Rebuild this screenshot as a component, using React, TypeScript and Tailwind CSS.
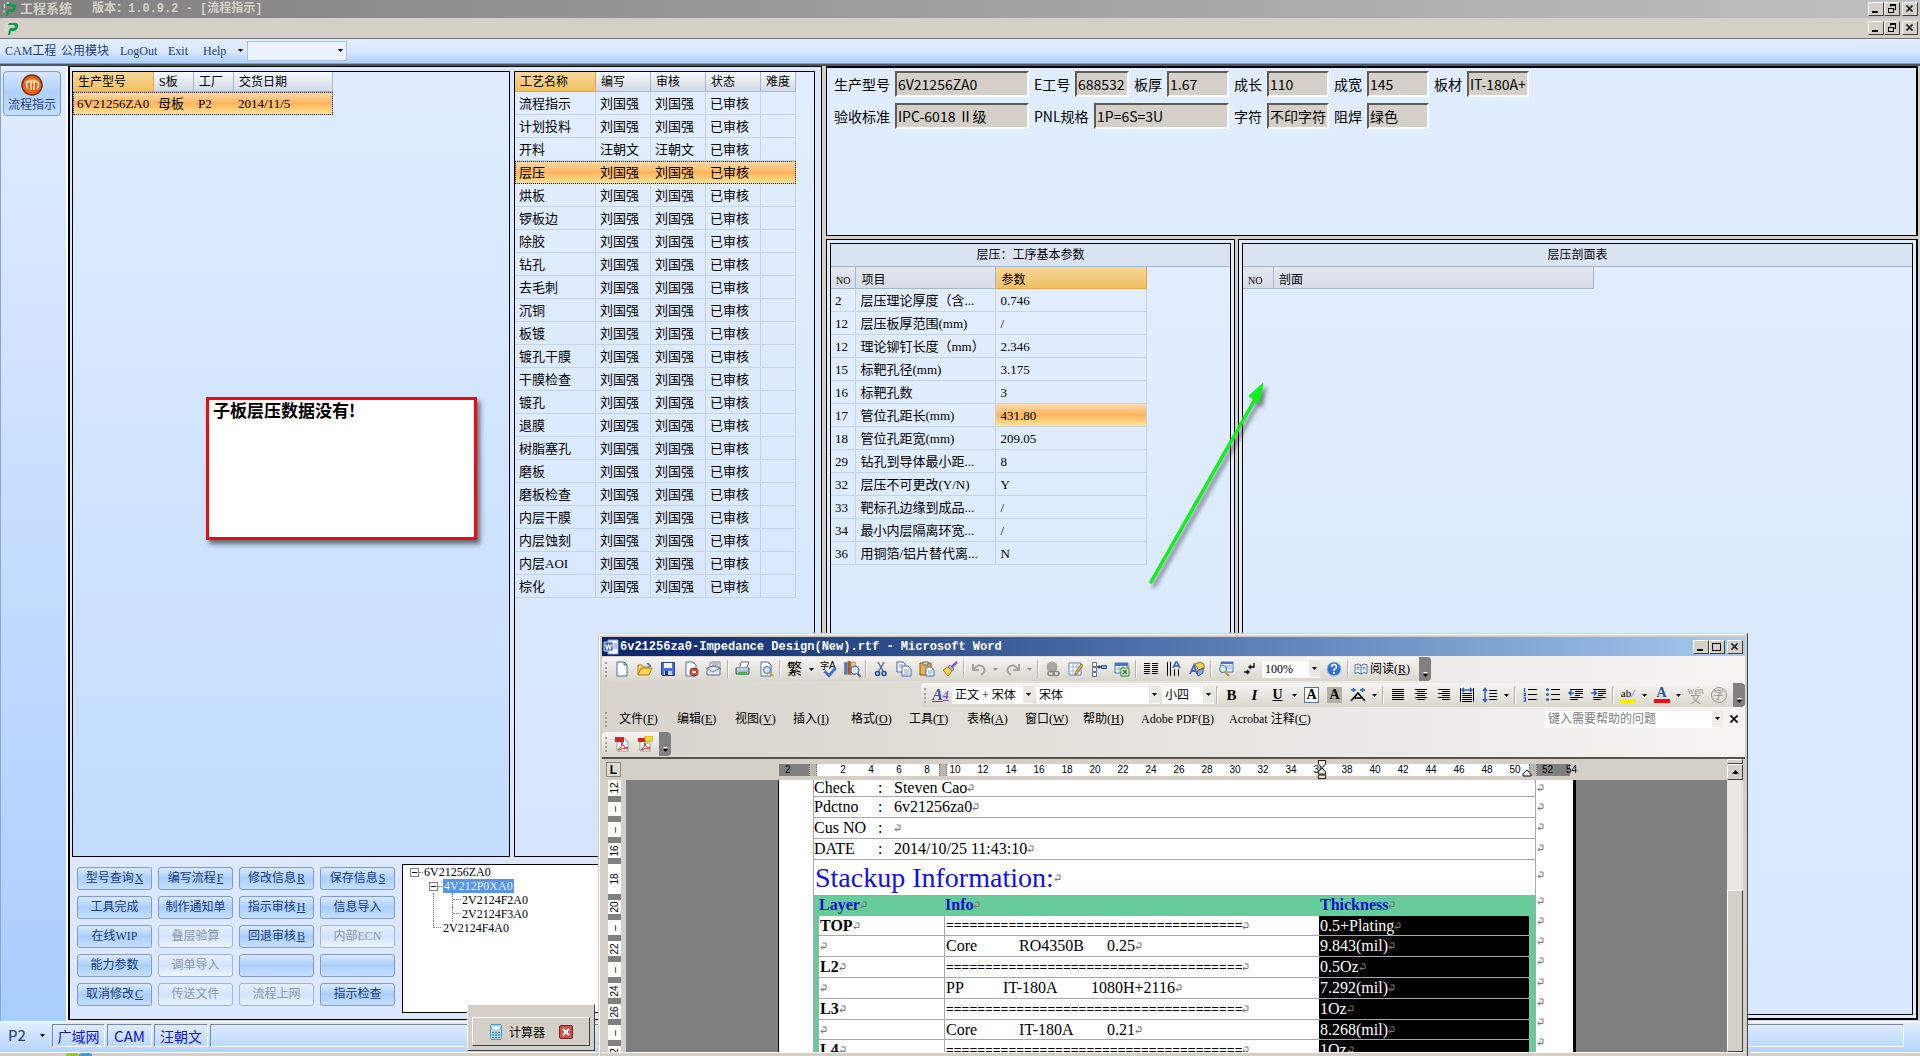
import React from "react";

const SERIF = "font-['Liberation_Serif','Noto_Sans_CJK_SC',serif]";
const SANS = "font-['Noto_Sans_CJK_SC',sans-serif]";
const MONO = "font-['Liberation_Mono','Noto_Sans_CJK_SC',monospace]";

const HEAD = "bg-linear-to-b from-[#f8fafd] via-[#e4e9f2] to-[#d3dae6] border-r border-b border-[#a3b8cc]";
const HEAD_FLAT = "bg-linear-to-b from-[#e3e7f0] to-[#d6dce8] border-r border-b border-[#a3b8cc]";
const HEAD_ON = "bg-linear-to-b from-[#f8d79b] to-[#f0c05e] border-r border-b border-[#e8a24a]";
const SELECTED = "bg-linear-to-b from-[#fcdcae] via-[#fdb45c] to-[#ffe796]";

/* ---------- icons ---------- */

function Svg({ children, className = "size-4" }: { children: React.ReactNode; className?: string }) {
  return (
    <svg viewBox="0 0 16 16" className={`shrink-0 ${className}`} aria-hidden="true">
      {children}
    </svg>
  );
}

const page = <path d="M3 1h7l3 3v11H3z" fill="#fff" stroke="#4a6ea5" />;

const lines = (xs: number[][]) => (
  <g stroke="#000" strokeWidth="1" shapeRendering="crispEdges">
    {xs.map(([a, b, y]) => (
      <path key={`${a}-${y}`} d={`M${a} ${y + 0.5}H${b}`} />
    ))}
  </g>
);

const icons: Record<string, React.ReactNode> = {
  新建: <Svg>{page}<path d="M10 1v3h3z" fill="#b9cdea" stroke="#4a6ea5" /></Svg>,
  打开: <Svg><path d="M1 14V4h4l1 2h6v3" fill="#f9e08c" stroke="#b07a14" /><path d="M1 14l3-7h11l-3 7z" fill="#ffd25a" stroke="#b07a14" /><path d="M9 3q3-3 4 1l1-1v3h-3l1-1q-1-2-3-2z" fill="#5a7fc0" /></Svg>,
  保存: <Svg><path d="M1.500 1.500h13v13h-12l-1-1z" fill="#4d6fd0" stroke="#2a3f8f" /><path d="M4 2h8v5H4z" fill="#fff" /><path d="M4 10h8v4H4z" fill="#c3cfe8" /><path d="M5 10h3v4H5z" fill="#24346f" /></Svg>,
  权限: <Svg>{page}<circle cx="11" cy="11" r="4" fill="#d94a2b" stroke="#a12c14" /><path d="M9 11h4" stroke="#fff" strokeWidth="2" /></Svg>,
  邮件: <Svg><path d="M4 6V2l2-1h8v8" fill="#fff" stroke="#6f7f99" /><path d="M1 7l6-2 7 2v7H1z" fill="#dfe6f4" stroke="#5a6b8c" /><path d="M1 7l6 4 7-4M6 3h6M6 5h6" fill="none" stroke="#6f7f99" /></Svg>,
  打印: <Svg><path d="M5 6l1-5h8l-2 5" fill="#fff" stroke="#5d6f8c" /><path d="M1 7h13v6H1z" fill="#a9bbd6" stroke="#3f5275" /><path d="M3 11h9v3H3z" fill="#4fb04a" /><path d="M2 8h11" stroke="#fff" /></Svg>,
  预览: <Svg>{page}<circle cx="9" cy="9" r="3.500" fill="#cfe6fa" stroke="#3e5f94" /><path d="M11.500 11.500l3.500 3.500" stroke="#caa04a" strokeWidth="2" /></Svg>,
  拼写: <Svg className="size-[18px]"><text x="0" y="8" fontSize="8" fontFamily="Noto Sans CJK SC">字</text><text x="8" y="8" fontSize="9" fontFamily="Liberation Sans">A</text><path d="M4 10l4 4 6-7" fill="none" stroke="#3f6fcf" strokeWidth="2.500" /></Svg>,
  信息检索: <Svg className="size-[18px]"><path d="M1 2h3v11H1z" fill="#5577c4" /><path d="M4 1h3v12H4z" fill="#b5522d" /><path d="M7 2h4v11H7z" fill="#dccb7a" stroke="#80713a" strokeWidth=".5" /><circle cx="10.500" cy="9" r="3.500" fill="#d8ebfb" stroke="#3e5f94" /><path d="M13 12l2.500 3" stroke="#7d55a8" strokeWidth="2" /></Svg>,
  剪切: <Svg><path d="M5 1l5 9M11 1L6 10" stroke="#5570a5" strokeWidth="1.500" /><circle cx="4.500" cy="12.500" r="2" fill="none" stroke="#1f3f8f" strokeWidth="1.500" /><circle cx="11" cy="12.500" r="2" fill="none" stroke="#1f3f8f" strokeWidth="1.500" /></Svg>,
  复制: <Svg><path d="M1 1h6l2 2v8H1z" fill="#fff" stroke="#3f66b5" /><path d="M6 5h6l3 3v7H6z" fill="#fff" stroke="#3f66b5" /><path d="M3 4h4M3 6h2M8 9h5M8 11h5M8 13h5" stroke="#7a9bd6" /></Svg>,
  粘贴: <Svg><path d="M1 2h11v12H1z" fill="#eab04a" stroke="#8a5a14" /><path d="M4 1h5v3H4z" fill="#ddd" stroke="#665" /><path d="M7 6h5l3 3v6H7z" fill="#fff" stroke="#3f66b5" /><path d="M9 10h4M9 12h4" stroke="#7a9bd6" /></Svg>,
  格式刷: <Svg><path d="M15 1l-5 5" stroke="#8a5ab0" strokeWidth="2.500" /><path d="M8 4l4 4-2 2-4-4z" fill="#9db2d8" stroke="#4a5f8c" strokeWidth=".7" /><path d="M6 6l4 4-4 5-5-6z" fill="#f5d44a" stroke="#9a7d14" /></Svg>,
  撤消: <Svg><path d="M2 3v6h6" fill="none" stroke="#a5a39c" strokeWidth="2" /><path d="M3 8q5-6 9-2t-2 8" fill="none" stroke="#a5a39c" strokeWidth="2" /></Svg>,
  恢复: <Svg><path d="M14 3v6H8" fill="none" stroke="#a5a39c" strokeWidth="2" /><path d="M13 8Q8 2 4 6t2 8" fill="none" stroke="#a5a39c" strokeWidth="2" /></Svg>,
  超链接: <Svg><circle cx="7" cy="6" r="5.500" fill="#a8a69f" /><rect x="3" y="10.500" width="6" height="4" rx="2" fill="none" stroke="#8a8882" strokeWidth="1.500" /><rect x="8" y="10.500" width="6" height="4" rx="2" fill="none" stroke="#8a8882" strokeWidth="1.500" /></Svg>,
  表格和边框: <Svg><path d="M1 2h12v12H1z" fill="#fff" stroke="#5c7fc4" /><path d="M1 6h12M1 10h12M5 2v12M9 2v12" stroke="#9db5e0" /><path d="M15 4l-6 9-2 1 0-2 6-9z" fill="#e8b042" stroke="#7a5a1a" strokeWidth=".7" /></Svg>,
  链接框: <Svg><path d="M1.500 1.500h4v4h-4zM1.500 6.500h4v4h-4zM1.500 11.500h4v4h-4z" fill="#fff" stroke="#5c6f94" /><path d="M10.500 4.500h5v3h-5z" fill="#8fb0ea" stroke="#2f4f94" /><path d="M6 6h4M8 4.500v3" stroke="#000" strokeWidth="1" /></Svg>,
  插入工作表: <Svg><path d="M1 2h13v10H1z" fill="#fff" stroke="#4b74c8" /><path d="M1 2h13v3H1z" fill="#4b74c8" /><path d="M1 8h13M5 5v7M9 5v7" stroke="#8aa9e2" /><path d="M7 7h8v8H7z" fill="#e6f4e2" stroke="#2f7f35" /><path d="M9 9l4 4M13 9l-4 4" stroke="#1f7a2b" strokeWidth="1.500" /></Svg>,
  分栏: <Svg>{lines([[1, 7, 2], [1, 7, 4], [1, 7, 6], [1, 7, 8], [1, 7, 10], [1, 7, 12], [9, 15, 2], [9, 15, 4], [9, 15, 6], [9, 15, 8], [9, 15, 10], [9, 15, 12]])}</Svg>,
  文字方向: <Svg><path d="M1.500 1v14M4.500 1v14M8.500 8v7M12.500 8v7" stroke="#000" shapeRendering="crispEdges" /><path d="M7 7l3-6h1l3 6M8.500 5h4" fill="none" stroke="#3558b5" strokeWidth="1.500" /></Svg>,
  绘图: <Svg><path d="M6 3l5-2 4 2v5l-5 2z" fill="#f0cf52" stroke="#8c7420" /><path d="M1 13l4-9 3 9M2 10h5" fill="none" stroke="#4a5fc0" strokeWidth="1.800" /><path d="M8 10l6-3v5l-5 3z" fill="#8ea6dd" stroke="#44599a" /></Svg>,
  文档结构图: <Svg><path d="M3 1h12v10H3z" fill="#e8f1fc" stroke="#4b74c8" /><path d="M3 1h12v2H3z" fill="#4b74c8" /><path d="M8 5h6M8 7h6" stroke="#8aa9e2" /><circle cx="5" cy="8" r="3.500" fill="#cfeaf2" stroke="#3e7f94" /><path d="M7 11l4 4" stroke="#c5983a" strokeWidth="2" /></Svg>,
  显示标记: <Svg><path d="M13 2v4H8M10 4L8 6l2 2M3 11h5M6 9l2 2-2 2" fill="none" stroke="#000" strokeWidth="1.300" /></Svg>,
  帮助图标: <Svg><circle cx="8" cy="8" r="7" fill="#2f6fe0" stroke="#9fc0f4" /><path d="M5.500 6q0-2.500 2.500-2.500T10.500 6Q10.500 7.500 8 8.500V10M8 11v2" fill="none" stroke="#fff" strokeWidth="1.700" /></Svg>,
  左对齐: <Svg>{lines([[2, 14, 2], [2, 14, 4], [2, 14, 6], [2, 14, 8], [2, 14, 10], [2, 14, 12]])}</Svg>,
  居中: <Svg>{lines([[2, 14, 2], [4, 12, 4], [2, 14, 6], [4, 12, 8], [2, 14, 10], [4, 12, 12]])}</Svg>,
  右对齐: <Svg>{lines([[2, 14, 2], [6, 14, 4], [2, 14, 6], [6, 14, 8], [2, 14, 10], [6, 14, 12]])}</Svg>,
  分散对齐: <Svg>{lines([[3, 13, 6], [3, 13, 8], [3, 13, 10], [3, 13, 12], [3, 13, 14]])}<path d="M1.500 1v14M14.500 1v14" stroke="#000" /><path d="M3 3h10M5 1L3 3l2 2M11 1l2 2-2 2" fill="none" stroke="#2f5fc4" strokeWidth="1.500" /></Svg>,
  行距: <Svg>{lines([[7, 15, 3], [7, 15, 6], [7, 15, 9], [7, 15, 12]])}<path d="M3 2v12M1 4l2-2.500L5 4M1 12l2 2.500L5 12" fill="none" stroke="#2f5fc4" strokeWidth="1.500" /></Svg>,
  编号: <Svg>{lines([[6, 15, 2], [6, 15, 7], [6, 15, 12]])}<path d="M2.500 1v4M1.500 6.500h2v2h-2M1.500 11h2v3h-2" fill="none" stroke="#2f5fc4" strokeWidth="1.300" /></Svg>,
  项目符号: <Svg>{lines([[6, 15, 2], [6, 15, 7], [6, 15, 12]])}<g fill="#2f5fc4"><circle cx="2.500" cy="2.500" r="1.500" /><circle cx="2.500" cy="7.500" r="1.500" /><circle cx="2.500" cy="12.500" r="1.500" /></g></Svg>,
  减少缩进: <Svg>{lines([[2, 15, 2], [7, 15, 4], [7, 15, 6], [7, 12, 8], [2, 15, 10], [2, 10, 12]])}<path d="M6 6H1M3.500 3.500L1 6l2.500 2.500" fill="none" stroke="#2f5fc4" strokeWidth="1.500" /></Svg>,
  增加缩进: <Svg>{lines([[2, 15, 2], [7, 15, 4], [7, 15, 6], [7, 12, 8], [2, 15, 10], [2, 10, 12]])}<path d="M0 6h5M3 3.500L5.500 6 3 8.500" fill="none" stroke="#2f5fc4" strokeWidth="1.500" /></Svg>,
  字符缩放: <Svg><path d="M1 14l7-8 7 8M4.500 11h7" fill="none" stroke="#000" strokeWidth="1.500" /><path d="M1 3h5M3.500 1v4M10 3h5M12.500 1v4" stroke="#2f5fc4" strokeWidth="1.500" /></Svg>,
};

function Caret({ dim = false }: { dim?: boolean }) {
  return (
    <svg viewBox="0 0 5 3" className="h-[3px] w-[5px] shrink-0" aria-hidden="true">
      <path d="M0 0h5L2.500 3z" fill={dim ? "#9a988f" : "#000"} />
    </svg>
  );
}

function LogoP() {
  return (
    <svg viewBox="0 0 14 15" className="h-[15px] w-[14px] shrink-0" aria-hidden="true">
      <path d="M4 2h6q4 0 3 4t-5 4H6l-1 4H3l1-5 1-2h4q1 0 1-1.500T8 4H3z" fill="#0d9a4a" />
      <path d="M1.500 2v4M3.500 1H6M.500 8l1 3" stroke="#e9f5ec" strokeWidth="1" />
    </svg>
  );
}

function Mark() {
  return (
    <svg viewBox="0 0 7 8" className="h-2 w-[7px] shrink-0" aria-hidden="true">
      <path d="M2.500 1h3.500v4.500H1M3 3.500l-2 2 2 2" fill="none" stroke="#777" />
    </svg>
  );
}

/* ---------- classic window controls ---------- */

const BEVEL = "border border-t-white border-l-white border-r-[#404040] border-b-[#404040] bg-[#d4d0c8]";

function WinButton({ kind }: { kind: "min" | "restore" | "max" | "close" }) {
  const label = { min: "最小化", restore: "还原", max: "最大化", close: "关闭" }[kind];
  return (
    <button aria-label={label} className={`flex h-[14px] w-4 items-center justify-center ${BEVEL} ${kind === "close" ? "ml-[2px]" : ""}`}>
      <svg viewBox="0 0 10 10" className="size-[10px]" fill="none" stroke="#000" shapeRendering="crispEdges" aria-hidden="true">
        {kind === "min" && <path d="M1 8h6" strokeWidth="2" />}
        {kind === "restore" && <path d="M3.500 3V.500h5v5H6M3 1h6M1.500 4.500h5v4h-5zM1 4h6" />}
        {kind === "max" && <path d="M.500 1.500h8v7h-8zM0 1h9" />}
        {kind === "close" && <path d="M1.500 1.500l6 6M7.500 1.500l-6 6" strokeWidth="1.500" shapeRendering="auto" />}
      </svg>
    </button>
  );
}

function WinButtons({ middle }: { middle: "restore" | "max" }) {
  return (
    <div className="flex">
      <WinButton kind="min" />
      <WinButton kind={middle} />
      <WinButton kind="close" />
    </div>
  );
}

/* ---------- main application ---------- */

function TopBars() {
  const item = "whitespace-nowrap";
  return (
    <header>
      <div className={`flex h-[18px] items-center bg-linear-to-r from-[#808080] to-[#c0c0c0] pl-[3px] pr-[2px] text-[12px] font-bold leading-none text-[#d4d0c8] ${MONO}`}>
        <LogoP />
        <h1 className="ml-[3px] flex flex-1 items-center gap-5 whitespace-pre">
          <span className="text-[13px]">工程系统</span>
          <span>版本：1.0.9.2 - [流程指示]</span>
        </h1>
        <WinButtons middle="restore" />
      </div>
      <div className="flex h-5 items-center justify-between bg-[#d4d0c8] pl-[5px] pr-[2px]">
        <LogoP />
        <WinButtons middle="restore" />
      </div>
      <nav className={`flex h-[26px] items-center border-b border-t border-b-[#7f9fc9] border-t-[#6e7480] bg-linear-to-b from-[#e3eefe] via-[#d9e8ff] to-[#abcfff] pb-px pl-[5px] text-[12px] text-[#1b3d7c] ${SERIF}`}>
        <button className={`${item} w-14 text-left`}>CAM工程</button>
        <button className={`${item} w-[59px] text-left`}>公用模块</button>
        <button className={`${item} w-12 text-left`}>LogOut</button>
        <button className={`${item} w-[35px] text-left`}>Exit</button>
        <button className={`${item} flex w-10 items-center justify-between`}>Help<Caret /></button>
        <div className="relative ml-1">
          <select aria-label="模块" className="h-5 w-[100px] appearance-none border border-[#a9c3e8] bg-[#eaf2fd]"><option></option></select>
          <span className="pointer-events-none absolute right-1 top-2"><Caret /></span>
        </div>
      </nav>
    </header>
  );
}

function Sidebar() {
  return (
    <aside className="flex w-[66px] shrink-0 flex-col border-l border-[#8aa6d2] bg-linear-to-b from-[#e1ecff] to-[#a9cdff] px-[2px] pt-[5px]">
      <button className={`flex h-[45px] w-[58px] flex-col items-center rounded-sm border border-[#7e9cc9] bg-linear-to-b from-[#d7e6fd] via-[#aed0fb] to-[#c5deff] pt-[2px] text-[12px] text-[#1b3d7c] ${SANS}`}>
        <svg viewBox="0 0 22 22" className="size-[22px]" aria-hidden="true">
          <circle cx="11" cy="11" r="10" fill="#e8621a" stroke="#7d2a10" strokeWidth="1.500" />
          <path d="M3 9q8-8 16 0" fill="#ffb066" />
          <path d="M7 7q-3 4 0 8M10 6v10M13 6v10M16 7q3 4 0 8" fill="none" stroke="#ffe9c9" strokeWidth="1.500" />
        </svg>
        <span className="leading-4">流程指示</span>
      </button>
    </aside>
  );
}

const AUTHOR = "刘国强";
const steps = ["流程指示", "计划投料", "开料", "层压", "烘板", "锣板边", "除胶", "钻孔", "去毛刺", "沉铜", "板镀", "镀孔干膜", "干膜检查", "镀孔", "退膜", "树脂塞孔", "磨板", "磨板检查", "内层干膜", "内层蚀刻", "内层AOI", "棕化"];

const ROW_ON = `${SELECTED} outline-1 -outline-offset-1 outline-dotted outline-black`;

function ModelGrid() {
  const th = "h-5 px-[5px] text-left text-[12px] font-normal leading-none";
  const td = "h-[23px] whitespace-nowrap px-1 leading-none";
  return (
    <section className="w-[438px] shrink-0 border border-black bg-linear-to-b from-[#e0edff] to-[#c2dcff]">
      <table className={`table-fixed border-separate border-spacing-0 text-[13px] ${SERIF}`}>
        <colgroup><col className="w-[81px]" /><col className="w-10" /><col className="w-10" /><col className="w-[99px]" /></colgroup>
        <thead>
          <tr>
            <th className={`${th} ${HEAD_ON}`}>生产型号</th>
            <th className={`${th} ${HEAD}`}>S板</th>
            <th className={`${th} ${HEAD}`}>工厂</th>
            <th className={`${th} ${HEAD}`}>交货日期</th>
          </tr>
        </thead>
        <tbody>
          <tr className={ROW_ON}>
            <td className={td}>6V21256ZA0</td>
            <td className={td}>母板</td>
            <td className={td}>P2</td>
            <td className={td}>2014/11/5</td>
          </tr>
        </tbody>
      </table>
    </section>
  );
}

function StepGrid() {
  const th = "h-5 px-[5px] text-left text-[12px] font-normal leading-none";
  const cell = "h-[23px] whitespace-nowrap px-1 leading-none";
  const line = "border-b border-r border-[#c3d3e8]";
  return (
    <section className="w-[301px] shrink-0 border border-black bg-linear-to-b from-[#e2eeff] via-[#dceaff] to-[#d6e5ff]">
      <table className={`table-fixed border-separate border-spacing-0 text-[13px] ${SERIF}`}>
        <colgroup><col className="w-[81px]" /><col className="w-[55px]" /><col className="w-[55px]" /><col className="w-[55px]" /><col className="w-[35px]" /></colgroup>
        <thead>
          <tr>
            <th className={`${th} ${HEAD_ON}`}>工艺名称</th>
            {["编写", "审核", "状态", "难度"].map((h) => <th key={h} className={`${th} ${HEAD}`}>{h}</th>)}
          </tr>
        </thead>
        <tbody>
          {steps.map((s) => {
            const on = s === "层压";
            const who = s === "开料" ? "汪朝文" : AUTHOR;
            const c = on ? cell : `${cell} ${line}`;
            return (
              <tr key={s} className={on ? ROW_ON : ""}>
                <td className={c}>{s}</td><td className={c}>{who}</td><td className={c}>{who}</td><td className={c}>已审核</td><td className={c}></td>
              </tr>
            );
          })}
        </tbody>
      </table>
    </section>
  );
}

type Cmd = { t: string; k?: string; off?: boolean };
const commands: Cmd[] = [
  { t: "型号查询", k: "X" }, { t: "编写流程", k: "F" }, { t: "修改信息", k: "R" }, { t: "保存信息", k: "S" },
  { t: "工具完成" }, { t: "制作通知单" }, { t: "指示审核", k: "H" }, { t: "信息导入" },
  { t: "在线WIP" }, { t: "叠层验算", off: true }, { t: "回退审核", k: "B" }, { t: "内部ECN", off: true },
  { t: "能力参数" }, { t: "调单导入", off: true }, { t: "" }, { t: "" },
  { t: "取消修改", k: "C" }, { t: "传送文件", off: true }, { t: "流程上网", off: true }, { t: "指示检查" },
];

function CommandPad() {
  return (
    <div className={`grid shrink-0 grid-cols-4 content-start gap-[6px] pt-[10px] text-[12px] ${SERIF}`}>
      {commands.map((c, i) => (
        <button
          key={i}
          disabled={c.off}
          aria-label={c.t || "备用"}
          className={`flex h-[23px] w-[75px] items-center justify-center whitespace-nowrap rounded-[3px] border pb-px leading-none ${c.off ? "border-[#9fb6d8] bg-linear-to-b from-[#e4effd] via-[#d3e4fb] to-[#eaf3ff] text-[#8d97a6]" : "border-[#7f9dcb] bg-linear-to-b from-[#d9e8fe] via-[#abcffc] to-[#c6deff] text-[#163a7a]"}`}
        >
          {c.t}{c.k && <span className="ml-[1px] underline">{c.k}</span>}
        </button>
      ))}
    </div>
  );
}

function Expander() {
  return (
    <span className="relative z-10 flex size-[9px] shrink-0 items-center justify-center border border-[#808080] bg-white">
      <span className="h-px w-[5px] bg-black" />
    </span>
  );
}

function PartTree() {
  const dots = "border-dotted border-[#808080]";
  return (
    <div className={`mt-[7px] h-[149px] flex-1 border border-r-0 border-black bg-white pl-[7px] text-[12px] leading-[14px] ${SERIF}`}>
      <div className="flex h-[14px] items-center"><Expander /><i className={`w-1 border-t ${dots}`} /><span className="ml-px">6V21256ZA0</span></div>
      <div className="ml-[23px]">
        <div className="flex h-[14px] items-center"><span className="-ml-[4px] flex items-center"><Expander /><i className={`w-1 border-t ${dots}`} /></span><span className="ml-[1px] bg-[#5a94ea] px-px text-[#e9f2ff]">4V212P0XA0</span></div>
        <div className={`border-l ${dots}`}>
          <div className="ml-[18px]">
            {["2V2124F2A0", "2V2124F3A0"].map((t) => (
              <div key={t} className={`flex h-[14px] border-l ${dots}`}><i className={`h-[7px] w-2 border-b ${dots}`} /><span className="ml-px">{t}</span></div>
            ))}
          </div>
        </div>
        <div className="flex h-[14px]"><i className={`h-[7px] w-2 border-b border-l ${dots}`} /><span className="ml-[2px]">2V2124F4A0</span></div>
      </div>
    </div>
  );
}

function Field({ id, label, value, lw, w }: { id: string; label: string; value: string; lw: string; w: string }) {
  return (
    <div className="flex items-center">
      <label htmlFor={id} className={`whitespace-nowrap text-[14px] leading-none ${lw}`}>{label}</label>
      <input id={id} readOnly value={value} className={`h-[26px] border-b-2 border-l-2 border-r-2 border-t-2 border-b-white border-l-[#5f5c57] border-r-white border-t-[#5f5c57] bg-[#d4d0c8] pl-px text-[14px] leading-none ${w}`} />
    </div>
  );
}

function InfoForm() {
  return (
    <section className={`h-[170px] shrink-0 border-b border-l border-r-2 border-t-2 border-black bg-[#e0edff] pl-[7px] pt-[3px] ${SANS}`}>
      <div className="flex gap-[5px]">
        <Field id="f1" label="生产型号" value="6V21256ZA0" lw="w-[61px]" w="w-[134px]" />
        <Field id="f2" label="E工号" value="688532" lw="w-[41px]" w="w-[54px]" />
        <Field id="f3" label="板厚" value="1.67" lw="w-[33px]" w="w-[62px]" />
        <Field id="f4" label="成长" value="110" lw="w-[33px]" w="w-[62px]" />
        <Field id="f5" label="成宽" value="145" lw="w-[33px]" w="w-[62px]" />
        <Field id="f6" label="板材" value="IT-180A+" lw="w-[33px]" w="w-[62px]" />
      </div>
      <div className="mt-[6px] flex gap-[5px]">
        <Field id="f7" label="验收标准" value="IPC-6018 Ⅱ级" lw="w-[61px]" w="w-[134px]" />
        <Field id="f8" label="PNL规格" value="1P=6S=3U" lw="w-[60px]" w="w-[135px]" />
        <Field id="f9" label="字符" value="不印字符" lw="w-[33px]" w="w-[62px]" />
        <Field id="f10" label="阻焊" value="绿色" lw="w-[33px]" w="w-[62px]" />
      </div>
    </section>
  );
}

const params: [string, string, string][] = [
  ["2", "层压理论厚度（含...", "0.746"],
  ["12", "层压板厚范围(mm)", "/"],
  ["12", "理论铆钉长度（mm）", "2.346"],
  ["15", "标靶孔径(mm)", "3.175"],
  ["16", "标靶孔数", "3"],
  ["17", "管位孔距长(mm)", "431.80"],
  ["18", "管位孔距宽(mm)", "209.05"],
  ["29", "钻孔到导体最小距...", "8"],
  ["32", "层压不可更改(Y/N)", "Y"],
  ["33", "靶标孔边缘到成品...", "/"],
  ["34", "最小内层隔离环宽...", "/"],
  ["36", "用铜箔/铝片替代离...", "N"],
];

const FRAME = "flex border border-black bg-[#dfecff] p-[3px]";
const TITLE = "flex h-[23px] items-center justify-center border-b border-[#a3b8cc] bg-[#dae3f1] text-[12px] font-normal";
const TH = "h-[22px] px-[5px] pt-1 text-left text-[12px] font-normal leading-none";

function ParamGrid() {
  const line = "h-[23px] whitespace-nowrap border-b border-r border-[#c3d3e8] px-1 leading-none";
  return (
    <div className={`${FRAME} w-[409px] shrink-0`}>
      <section className={`flex-1 border border-black bg-linear-to-b from-[#e2eeff] to-[#d6e7ff] ${SERIF}`}>
        <h2 className={TITLE}>层压：工序基本参数</h2>
        <table className="table-fixed border-separate border-spacing-0 text-[13px]">
          <colgroup><col className="w-[25px]" /><col className="w-[140px]" /><col className="w-[151px]" /></colgroup>
          <thead>
            <tr><th className={`${TH} ${HEAD_FLAT}`}><span className="text-[10px]">NO</span></th><th className={`${TH} ${HEAD_FLAT}`}>项目</th><th className={`${TH} ${HEAD_ON}`}>参数</th></tr>
          </thead>
          <tbody>
            {params.map(([n, name, v]) => (
              <tr key={n + name}>
                <td className={line}>{n}</td>
                <td className={line}>{name}</td>
                <td className={`${line} ${v === "431.80" ? SELECTED : ""}`}>{v}</td>
              </tr>
            ))}
          </tbody>
        </table>
      </section>
    </div>
  );
}

function ProfileGrid() {
  return (
    <div className={`${FRAME} flex-1 border-r-2 border-b-2`}>
      <section className={`flex-1 border border-black bg-linear-to-b from-[#e2eeff] to-[#d6e7ff] ${SERIF}`}>
        <h2 className={TITLE}>层压剖面表</h2>
        <table className="table-fixed border-separate border-spacing-0">
          <colgroup><col className="w-[31px]" /><col className="w-80" /></colgroup>
          <thead><tr><th className={`${TH} ${HEAD_FLAT}`}><span className="text-[10px]">NO</span></th><th className={`${TH} ${HEAD_FLAT}`}>剖面</th></tr></thead>
        </table>
      </section>
    </div>
  );
}

function StatusBar() {
  const tab = "flex h-[23px] items-center justify-center border border-b-white border-l-[#7d8799] border-r-white border-t-[#7d8799] leading-none text-[#1414c4]";
  return (
    <footer>
      <div className={`flex h-[31px] items-center gap-[2px] border-t border-white bg-linear-to-b from-[#e3eeff] to-[#b4d3fc] pb-[3px] pl-2 pr-4 text-[15px] ${SANS}`}>
        <button className="flex w-[42px] items-center gap-[14px] text-[#1b3d7c]">P2<Caret /></button>
        <span className={`${tab} w-[53px] text-[14px]`}>广域网</span>
        <span className={`${tab} w-[45px]`}>CAM</span>
        <span className={`${tab} w-[54px] text-[14px]`}>汪朝文</span>
        <span className={`${tab} flex-1`} />
      </div>
      <div className="flex h-1 items-end border-t border-white bg-[#d4d0c8] pl-[66px]">
        <span className="h-[3px] w-[13px] rounded-t-full bg-[#9ec819]" />
        <span className="h-[3px] w-[13px] rounded-t-full bg-[#3f97e6]" />
      </div>
    </footer>
  );
}

/* ---------- Word window ---------- */

function Grip() {
  return <span className="mx-[3px] h-[15px] w-0 shrink-0 border-l-2 border-dotted border-[#a09d94]" />;
}
function Sep() {
  return <span className="mx-[2px] h-[18px] w-[2px] shrink-0 border-l border-[#b5b1a6] border-r border-r-white" />;
}
function Tool({ name, children }: { name: string; children?: React.ReactNode }) {
  return <button aria-label={name} title={name} className="flex h-[22px] w-[23px] shrink-0 items-center justify-center leading-none">{children ?? icons[name]}</button>;
}
function Drop({ name, dim }: { name: string; dim?: boolean }) {
  return <button aria-label={name} className="flex h-[22px] w-[11px] shrink-0 items-center justify-center"><Caret dim={dim} /></button>;
}
function BarEnd() {
  return <span className="flex h-6 w-3 shrink-0 flex-col items-center justify-end gap-px rounded-r bg-[#808080] pb-1"><i className="h-px w-[5px] bg-white" /><Caret /></span>;
}
function Combo({ label, value, className }: { label: string; value: string; className: string }) {
  return (
    <div className={`relative shrink-0 ${className}`}>
      <select aria-label={label} className="h-[17px] w-full appearance-none bg-white pl-[3px] text-[12px] leading-none"><option>{value}</option></select>
      <span className="pointer-events-none absolute right-0 top-0 flex h-[17px] w-[11px] items-center justify-center bg-[#eae7e0]"><Caret /></span>
    </div>
  );
}

const BAR = "flex items-center rounded bg-linear-to-b from-[#f6f5f2] to-[#d9d6cd]";

function WordToolbars() {
  return (
    <div className={`bg-linear-to-r from-[#d8d4cc] to-[#f5f4f2] text-[12px] ${SERIF}`}>
      <div className="flex h-[26px] items-center">
        <div className={`${BAR} h-6`}>
          <Grip />
          {["新建", "打开", "保存", "权限", "邮件"].map((n) => <Tool key={n} name={n} />)}
          <Sep />
          <Tool name="打印" /><Tool name="预览" />
          <Sep />
          <Tool name="繁简转换"><span className="bg-[#dedbd3] text-[15px]">繁</span></Tool><Drop name="转换选项" />
          <Tool name="拼写" /><Tool name="信息检索" />
          <Sep />
          {["剪切", "复制", "粘贴", "格式刷"].map((n) => <Tool key={n} name={n} />)}
          <Sep />
          <Tool name="撤消" /><Drop name="撤消列表" dim /><Tool name="恢复" /><Drop name="恢复列表" dim />
          <Sep />
          {["超链接", "表格和边框", "链接框", "插入工作表"].map((n) => <Tool key={n} name={n} />)}
          <Sep />
          {["分栏", "文字方向", "绘图"].map((n) => <Tool key={n} name={n} />)}
          <Sep />
          <Tool name="文档结构图" /><Tool name="显示标记" />
          <Combo label="显示比例" value="100%" className="mx-[2px] w-[58px]" />
          <Tool name="帮助图标" />
          <Sep />
          <button className="flex h-[22px] w-[68px] items-center gap-[2px] whitespace-nowrap pl-[3px]">
            <svg viewBox="0 0 16 14" className="h-3 w-[14px]" aria-hidden="true"><path d="M1 2q4-2 7 1 3-3 7-1v10q-4-2-7 1-3-3-7-1z" fill="#e9f0fb" stroke="#46618f" /><path d="M8 3v10M3 5h3M3 7h3M10 5h3M10 7h3" stroke="#46618f" /></svg>
            <span>阅读(<u>R</u>)</span>
          </button>
          <BarEnd />
        </div>
      </div>
      <div className="flex h-[26px] items-center justify-end">
        <div className={`${BAR} h-6`}>
          <Grip />
          <Tool name="样式"><span className="text-[16px] font-bold italic text-[#3d4fb5] underline">A</span><span className="text-[12px] font-bold italic text-[#7a55b8] underline">4</span></Tool>
          <Combo label="样式名" value="正文 + 宋体" className="mr-[2px] w-[82px]" />
          <Combo label="字体" value="宋体" className="mr-[2px] w-[124px]" />
          <Combo label="字号" value="小四" className="w-[52px]" />
          <Sep />
          <Tool name="加粗"><b className="text-[15px]">B</b></Tool>
          <Tool name="倾斜"><b className="text-[15px] italic">I</b></Tool>
          <Tool name="下划线"><b className="text-[14px] underline">U</b></Tool><Drop name="下划线样式" />
          <Tool name="字符边框"><b className="border border-[#5c7396] bg-white px-[1px] text-[14px] leading-[14px]">A</b></Tool>
          <Tool name="字符底纹"><b className="bg-[#b3b0a8] px-[2px] text-[14px] leading-4">A</b></Tool>
          <Tool name="字符缩放" /><Drop name="缩放选项" />
          <Sep />
          {["左对齐", "居中", "右对齐", "分散对齐", "行距"].map((n) => <Tool key={n} name={n} />)}<Drop name="行距选项" />
          <Sep />
          {["编号", "项目符号", "减少缩进", "增加缩进"].map((n) => <Tool key={n} name={n} />)}
          <Sep />
          <Tool name="突出显示"><span className="flex flex-col items-center"><span className="text-[11px] leading-[11px]">ab<i className="text-[#3f66b5]">/</i></span><i className="h-1 w-4 bg-[#f6f000]" /></span></Tool><Drop name="突出显示颜色" />
          <Tool name="字体颜色"><span className="flex flex-col items-center"><b className="text-[14px] leading-[12px] text-[#2f4fa0]">A</b><i className="h-1 w-4 bg-[#ea0f0f]" /></span></Tool><Drop name="颜色选项" />
          <Tool name="拼音指南"><span className="flex flex-col items-center text-[#98958c]"><span className="text-[10px] leading-[7px]">wén</span><span className="text-[11px] leading-[10px]">文</span></span></Tool>
          <Tool name="带圈字符"><span className="flex size-4 items-center justify-center rounded-full border border-[#98958c] text-[11px] leading-none text-[#98958c]">字</span></Tool>
          <span className="w-[3px]" />
          <BarEnd />
        </div>
      </div>
      <div className="flex h-[23px] items-center pb-px">
        <Grip />
        <div className="flex pl-[9px]">
          {[["文件", "F"], ["编辑", "E"], ["视图", "V"], ["插入", "I"], ["格式", "O"], ["工具", "T"], ["表格", "A"], ["窗口", "W"], ["帮助", "H"]].map(([t, k]) => (
            <button key={t} className="w-[58px] whitespace-nowrap text-left">{t}(<u>{k}</u>)</button>
          ))}
          <button className="w-[88px] whitespace-nowrap text-left">Adobe PDF(<u>B</u>)</button>
          <button className="whitespace-nowrap">Acrobat 注释(<u>C</u>)</button>
        </div>
        <div className="relative ml-auto">
          <input aria-label="帮助" placeholder="键入需要帮助的问题" className="h-[17px] w-[178px] bg-white pl-[3px] text-[12px] placeholder:text-[#808080]" />
          <span className="absolute right-0 top-0 flex h-[17px] w-[11px] items-center justify-center bg-[#eeece7]"><Caret /></span>
        </div>
        <button aria-label="关闭文档" className="mx-[7px]"><svg viewBox="0 0 8 8" className="size-2" aria-hidden="true"><path d="M.500.500l7 7M7.500.500l-7 7" stroke="#000" strokeWidth="1.600" /></svg></button>
      </div>
      <div className="flex h-[26px] items-center">
        <div className={`${BAR} h-6`}>
          <Grip />
          <Tool name="转换为 PDF"><Svg><path d="M3 3h8l3 3v9H3z" fill="#fff" stroke="#999" /><path d="M1 1h9v5H1z" fill="#e02020" /><path d="M4 14q5-4 4-8 1 6 6 6-5 0-10 2z" fill="none" stroke="#d21f1f" /></Svg></Tool>
          <Tool name="转换并审阅"><Svg><path d="M3 4h8l2 3v8H3z" fill="#fff" stroke="#999" /><path d="M1 2h8v4H1z" fill="#e02020" /><path d="M8 0h8v5h-4l-2 3V5H8z" fill="#f8d73a" stroke="#b08d12" strokeWidth=".6" /><path d="M4 14q5-4 4-7 1 5 5 5-4 0-9 2z" fill="none" stroke="#d21f1f" /></Svg></Tool>
          <span className="w-[3px]" />
          <BarEnd />
        </div>
      </div>
    </div>
  );
}

const rulerNumbers = Array.from({ length: 25 }, (_, i) => (i + 1) * 2);

function Ruler() {
  return (
    <div className="flex h-[21px] shrink-0 items-center bg-[#d4d0c8] text-[10px] leading-none font-['Liberation_Sans',sans-serif]">
      <span className="ml-1 flex size-[15px] items-center justify-center border border-[#8a877f] bg-[#dedbd4] text-[12px] font-bold">L</span>
      <div className="relative ml-[158px] flex h-3 items-center">
        <span className="h-3 w-[34px] bg-[#808080] pl-[6px] leading-3">2</span>
        <span className="flex h-3 bg-white pl-4 pr-[5px] leading-3">
          {rulerNumbers.map((n) => <span key={n} className="w-7 text-center">{n}</span>)}
        </span>
        <span className="flex h-3 w-9 bg-[#808080] pl-2 leading-3">52</span>
        <span className="-ml-1 leading-3">54</span>
        {["left-[30px]", "left-[160px]", "left-[750px]"].map((p) => (
          <span key={p} className={`absolute top-0 h-3 w-2 border-x border-dotted border-[#777] bg-[#b9b6ae] ${p}`} />
        ))}
        <svg viewBox="0 0 10 22" className="absolute -top-1 left-[538px] h-5 w-[10px]" fill="#e8e5de" stroke="#000" aria-hidden="true"><path d="M1 .500h8v4l-4 4-4-4zM5 9l4 4v2.500H1V13zM1 16.500h8v4H1z" /></svg>
        <svg viewBox="0 0 10 8" className="absolute left-[743px] top-[5px] h-2 w-[10px]" fill="#fff" stroke="#000" aria-hidden="true"><path d="M5 1l4 4v2H1V5z" /></svg>
      </div>
    </div>
  );
}

const vSegments: [string, string][] = [["12", "h-4"], ["–", "h-[14px]"], ["–", "h-[15px]"], ["16", "h-[15px]"], ["18", "h-[30px]"], ["20", "h-[14px]"], ["–", "h-[15px]"], ["22", "h-[15px]"], ["–", "h-[15px]"], ["24", "h-[15px]"], ["26", "h-[15px]"], ["–", "h-[15px]"]];

function VRuler() {
  return (
    <div className="ml-[6px] mr-[5px] w-[13px] shrink-0 bg-white text-[10px] leading-none font-['Liberation_Sans',sans-serif]">
      {vSegments.map(([t, h], i) => (
        <div key={i} className="border-b-[6px] border-[#808080]">
          <div className={`flex items-center justify-center ${h}`}><span className="-rotate-90">{t}</span></div>
        </div>
      ))}
      <div className="flex justify-center"><span className="-rotate-90">2</span></div>
    </div>
  );
}

const docInfo: [string, string][] = [["Check", "Steven Cao"], ["Pdctno", "6v21256za0"], ["Cus NO", ""], ["DATE", "2014/10/25 11:43:10"]];
const RULE = "=".repeat(38);
const stack: { layer: string; info: string[]; thick: string }[] = [
  { layer: "TOP", info: [RULE], thick: "0.5+Plating" },
  { layer: "", info: ["Core", "RO4350B", "0.25"], thick: "9.843(mil)" },
  { layer: "L2", info: [RULE], thick: "0.5Oz" },
  { layer: "", info: ["PP", "IT-180A", "1080H+2116"], thick: "7.292(mil)" },
  { layer: "L3", info: [RULE], thick: "1Oz" },
  { layer: "", info: ["Core", "IT-180A", "0.21"], thick: "8.268(mil)" },
  { layer: "L4", info: [RULE], thick: "1Oz" },
];
/* Height of each line of the page: information, heading, table header, table rows. */
const pageLines = ["h-[17px]", "h-[21px]", "h-[21px]", "h-[21px]", "h-[35px]", "h-5", "h-5", "h-[21px]", "h-[21px]", "h-[21px]", "h-[21px]", "h-5", "h-[21px]"];

function Document() {
  const GL = "border-[#a8a8a8]";
  return (
    <div className={`flex w-[798px] shrink-0 border-l border-r-[3px] border-black bg-white pl-[34px] text-[16px] ${SERIF}`}>
      <div className={`w-[723px] shrink-0 border-x ${GL}`}>
        <dl>
          {docInfo.map(([k, v], i) => (
            <div key={k} className={`flex items-center border-b leading-none ${GL} ${pageLines[i]}`}>
              <dt className="flex w-20"><span className="w-16">{k}</span>:</dt>
              <dd className="flex items-center">{v}<Mark /></dd>
            </div>
          ))}
        </dl>
        <h2 className={`flex items-center pl-px text-[28px] leading-none text-[#1010e4] ${pageLines[4]}`}>Stackup Information:<Mark /></h2>
        <div className="bg-[#66cc99] pl-1 pr-[6px]">
          <table className="w-full table-fixed border-separate border-spacing-0 text-left leading-none">
            <colgroup><col className="w-[126px]" /><col /><col className="w-[210px]" /></colgroup>
            <thead>
              <tr className="text-[#1010d0]">
                {["Layer", "Info", "Thickness"].map((h) => <th key={h} className="h-5 p-0 pl-px"><span className="flex items-center">{h}<Mark /></span></th>)}
              </tr>
            </thead>
            <tbody>
              {stack.map((r, i) => {
                const h = pageLines[i + 6];
                return (
                  <tr key={i}>
                    <th className={`border-l border-t bg-white p-0 pl-px ${GL} ${h}`}><span className="flex items-center">{r.layer}<Mark /></span></th>
                    <td className={`border-l border-t bg-white p-0 pl-px ${GL} ${h}`}>
                      {r.info.length === 1 ? (
                        <span className={`flex items-center text-[13px] ${MONO}`}>{r.info[0]}<Mark /></span>
                      ) : (
                        <span className="flex items-center"><span className={r.info[0] === "PP" ? "w-[57px]" : "w-[73px]"}>{r.info[0]}</span><span className="w-[88px]">{r.info[1]}</span>{r.info[2]}<Mark /></span>
                      )}
                    </td>
                    <td className={`border-t bg-black p-0 pl-px text-white ${GL} ${h}`}><span className="flex items-center">{r.thick}<Mark /></span></td>
                  </tr>
                );
              })}
            </tbody>
          </table>
        </div>
      </div>
      <div className="flex flex-col pl-px">
        {pageLines.map((h, i) => (
          <span key={i} className={`flex items-center ${h}`}><Mark /></span>
        ))}
      </div>
    </div>
  );
}

function WordWindow() {
  return (
    <section className="absolute bottom-0 left-[598px] top-[633px] z-20 flex w-[1150px] flex-col border-l border-r border-t border-l-[#d4d0c8] border-r-[#404040] border-t-[#d4d0c8] bg-[#d4d0c8]">
      <div className="flex flex-1 flex-col overflow-hidden border-l border-t border-white px-[2px] pt-[2px]">
        <div className="flex h-[19px] shrink-0 items-center bg-linear-to-r from-[#0a246a] to-[#a6caf0] pl-px pr-[2px]">
          <svg viewBox="0 0 16 16" className="size-4 shrink-0" aria-hidden="true"><path d="M5 1h10v14H5z" fill="#fff" stroke="#7f9bd0" /><path d="M11 5h3M11 7h3M11 9h3" stroke="#5c82c8" /><path d="M1 3h9v9H1z" fill="#3b63b5" stroke="#c9d8f3" /><path d="M2.500 5l1.500 5 1.500-4L7 10l1.500-5" fill="none" stroke="#fff" strokeWidth="1.200" /></svg>
          <h2 className={`ml-px flex-1 whitespace-nowrap text-[12px] font-bold leading-none text-white ${MONO}`}>6v21256za0-Impedance Design(New).rtf - Microsoft Word</h2>
          <WinButtons middle="max" />
        </div>
        <WordToolbars />
        <div className="flex min-h-0 flex-1 border-t-2 border-[#56534d]">
          <div className="flex min-h-0 flex-1 flex-col">
            <Ruler />
            <div className="flex min-h-0 flex-1 overflow-hidden">
              <VRuler />
              <div className="flex min-w-0 flex-1 bg-[#808080] pl-[152px]"><Document /></div>
            </div>
          </div>
          <div className="mr-[2px] flex w-4 shrink-0 flex-col bg-[#e9e7e2]">
            <span className={`h-[5px] ${BEVEL}`} />
            <button aria-label="向上滚动" className={`flex h-4 items-center justify-center ${BEVEL}`}><svg viewBox="0 0 7 4" className="h-1 w-[7px]" aria-hidden="true"><path d="M0 4h7L3.500 0z" /></svg></button>
            <span className="h-[110px]" />
            <span className={`flex-1 ${BEVEL}`} />
          </div>
        </div>
        <div className="h-1 shrink-0 border-t border-white bg-[#d4d0c8]" />
      </div>
    </section>
  );
}

function Calculator() {
  return (
    <div className={`absolute bottom-[5px] left-[467px] z-10 w-32 p-1 pt-3 ${BEVEL}`}>
      <div className={`flex h-[29px] items-center pl-[17px] text-[12px] ${SANS} ${BEVEL}`}>
        <svg viewBox="0 0 12 16" className="h-4 w-3" aria-hidden="true"><rect x=".5" y=".5" width="11" height="15" rx="1" fill="#bfe0f4" stroke="#5593bd" /><path d="M2 2h8v4H2z" fill="#f2fbff" stroke="#6fa9cd" strokeWidth=".6" /><path d="M2 8.500h8M2 11h8M2 13.500h8" stroke="#3f86b8" strokeWidth="1.300" strokeDasharray="2 1" /></svg>
        <span className="ml-[7px] flex-1 leading-none">计算器</span>
        <button aria-label="关闭计算器" className="mr-4 flex size-[14px] items-center justify-center rounded-[2px] border border-[#6e2a22] bg-[#c9564a]"><svg viewBox="0 0 8 8" className="size-2" aria-hidden="true"><path d="M1 1l6 6M7 1L1 7" stroke="#fff" strokeWidth="1.800" /></svg></button>
      </div>
    </div>
  );
}

function Annotations() {
  return (
    <>
      <p className={`absolute left-[206px] top-[397px] z-10 h-[143px] w-[271px] border-[3px] border-[#ec0c0c] bg-white pl-1 text-[17px] font-bold leading-5 shadow-[3px_4px_5px_rgba(0,0,0,0.55)] ${SANS}`}>子板层压数据没有!</p>
      <svg viewBox="0 0 130 215" className="absolute left-[1143px] top-[376px] z-10 h-[215px] w-[130px] drop-shadow-[3px_4px_2px_rgba(0,0,0,0.5)]" aria-hidden="true">
        <path d="M8 206L115 18" stroke="#10f01c" strokeWidth="3.500" strokeLinecap="round" />
        <path d="M120 7L106 20l10 7z" fill="#10f01c" stroke="#10f01c" strokeLinejoin="round" />
      </svg>
    </>
  );
}

export default function App() {
  return (
    <div className="relative flex h-screen flex-col overflow-hidden bg-[#d4d0c8] text-black">
      <TopBars />
      <div className="flex min-h-0 flex-1 border-t-2 border-[#4c5661]">
        <Sidebar />
        <main className="flex min-w-0 flex-1 gap-1 border-l-2 border-white bg-[#d4d0c8] pb-px pr-[2px]">
          <div className="flex w-[754px] shrink-0 flex-col border-b border-l-2 border-r border-t border-black bg-[#dbe8ff] pl-[2px] pt-1">
            <div className="flex min-h-0 flex-1 gap-1"><ModelGrid /><StepGrid /></div>
            <div className="flex h-[162px] shrink-0 gap-[7px] pl-[5px]"><CommandPad /><PartTree /></div>
          </div>
          <div className="flex min-w-0 flex-1 flex-col gap-[3px]">
            <InfoForm />
            <div className="flex min-h-0 flex-1 gap-[3px]"><ParamGrid /><ProfileGrid /></div>
          </div>
        </main>
      </div>
      <StatusBar />
      <Annotations />
      <Calculator />
      <WordWindow />
    </div>
  );
}
